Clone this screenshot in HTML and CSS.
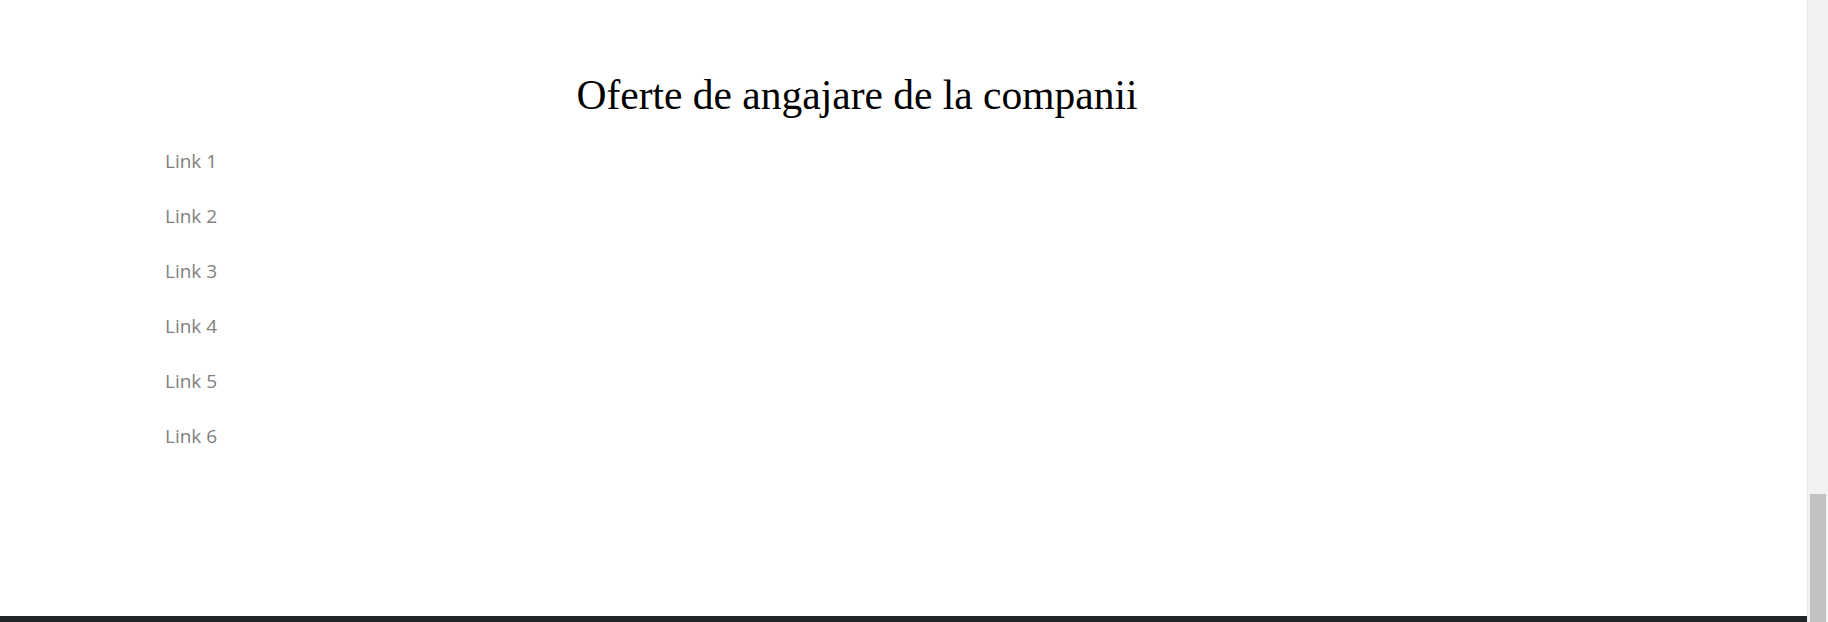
FILE: index.html
```html
<!DOCTYPE html>
<html lang="ro">
<head>
<meta charset="utf-8">
<title>Oferte de angajare de la companii</title>
<link rel="stylesheet" href="styles.css">
</head>
<body>
<div class="page">
  <main class="content">
    <section class="jobs">
      <h2 class="jobs-title">Oferte de angajare de la companii</h2>
      <ul class="jobs-links">
        <li><a href="#">Link 1</a></li>
        <li><a href="#">Link 2</a></li>
        <li><a href="#">Link 3</a></li>
        <li><a href="#">Link 4</a></li>
        <li><a href="#">Link 5</a></li>
        <li><a href="#">Link 6</a></li>
      </ul>
    </section>
    <footer class="footer"></footer>
  </main>
  <div class="scrollbar"><div class="scrollbar-thumb"></div></div>
</div>
</body>
</html>
```
FILE: styles.css
```css
html, body {
  margin: 0;
  padding: 0;
  height: 622px;
  overflow: hidden;
  background: #fff;
}
.page {
  display: flex;
  height: 622px;
}
.content {
  flex: 1;
  display: flex;
  flex-direction: column;
  min-width: 0;
}
.jobs {
  flex: 1;
  padding: 71px 0 0 165px;
  width: 1384px;
}
.jobs-title {
  margin: 0;
  text-align: center;
  font-family: "Liberation Serif", "DejaVu Serif", serif;
  font-weight: 400;
  font-size: 41.5px;
  line-height: 48px;
  color: #000;
}
.jobs-links {
  list-style: none;
  margin: 0;
  padding: 0;
  margin-top: 30px;
  display: flex;
  flex-direction: column;
  gap: 29px;
}
.jobs-links li {
  line-height: 25px;
}
.jobs-links a {
  font-family: "Open Sans", "Noto Sans", sans-serif;
  font-size: 19px;
  color: #808080;
  text-decoration: none;
}
.footer {
  height: 6px;
  background: #212529;
}
.scrollbar {
  width: 20px;
  background: #f1f1f1;
  border-left: 1px solid #e8e8e8;
  display: flex;
  flex-direction: column;
  justify-content: flex-end;
}
.scrollbar-thumb {
  height: 128px;
  margin: 0 2px;
  background: #c1c1c1;
}
```
